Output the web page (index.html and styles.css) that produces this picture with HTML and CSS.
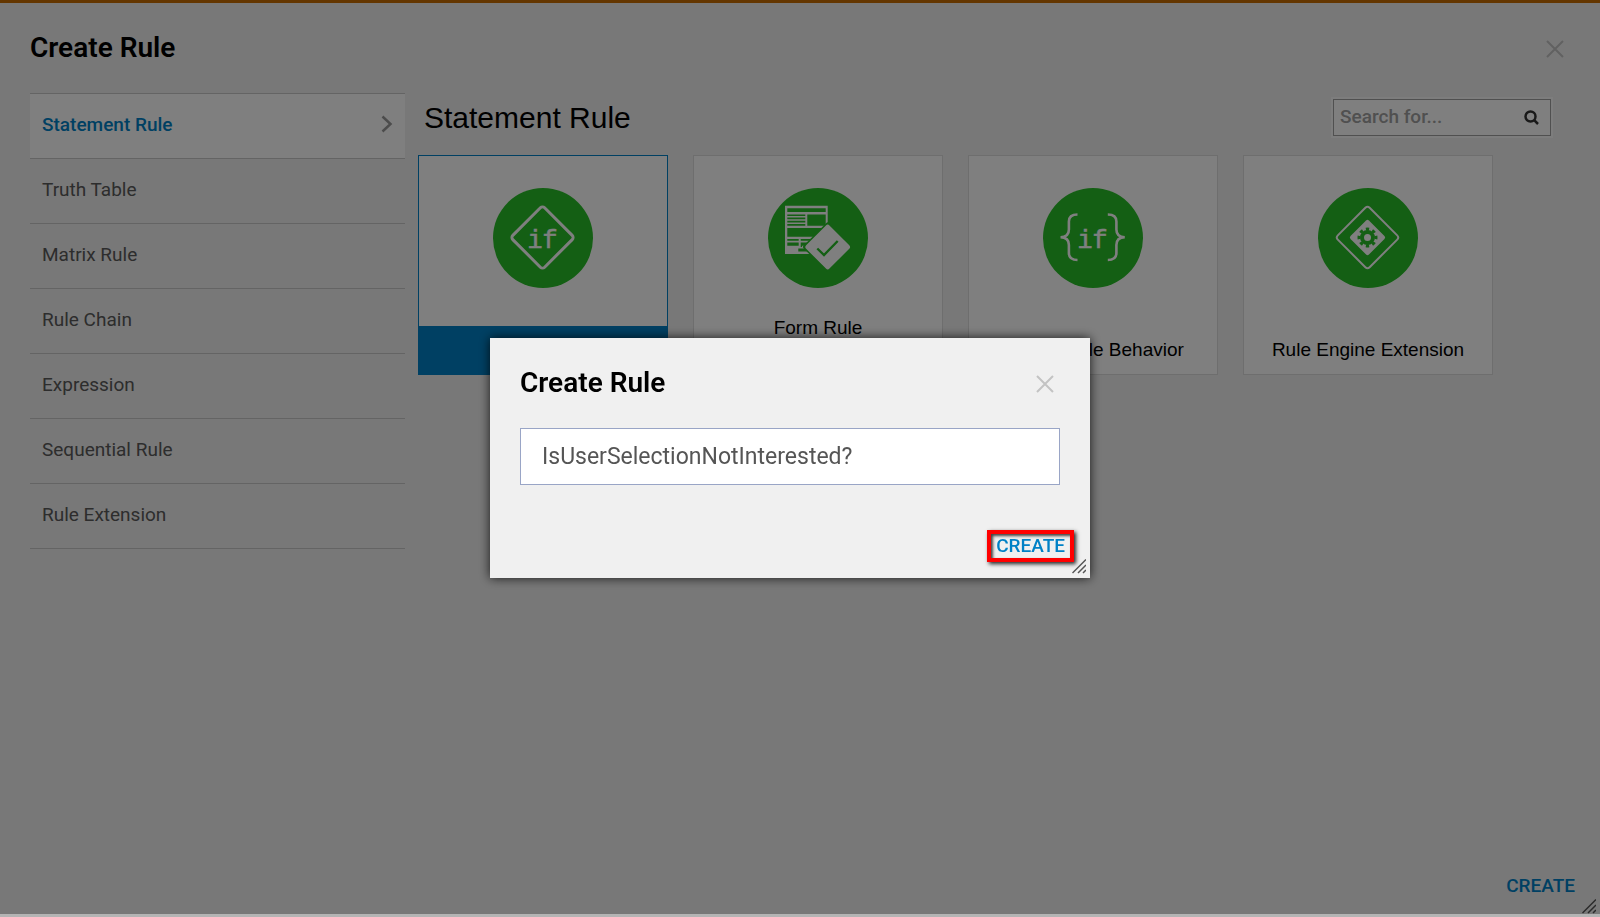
FILE: index.html
```html
<!DOCTYPE html>
<html lang="en">
<head>
<meta charset="utf-8">
<title>Create Rule</title>
<link rel="stylesheet" href="styles.css">
</head>
<body>
<div class="page">
  <header class="dialog-header">
    <h1 class="dialog-title">Create Rule</h1>
    <button class="close" type="button" aria-label="Close">
      <svg width="18" height="18" viewBox="0 0 18 18"><path d="M1 1L17 17M17 1L1 17"/></svg>
    </button>
  </header>

  <div class="content">
    <nav class="categories" aria-label="Rule categories">
      <a class="category category-active" href="#">Statement Rule
        <svg width="12" height="18" viewBox="0 0 12 18"><path d="M1.500 1.500L9.500 9L1.500 16.500"/></svg>
      </a>
      <a class="category" href="#">Truth Table</a>
      <a class="category" href="#">Matrix Rule</a>
      <a class="category" href="#">Rule Chain</a>
      <a class="category" href="#">Expression</a>
      <a class="category" href="#">Sequential Rule</a>
      <a class="category" href="#">Rule Extension</a>
    </nav>

    <main class="panel">
      <div class="panel-header">
        <h2 class="panel-title">Statement Rule</h2>
        <form class="search">
          <input class="search-input" type="text" placeholder="Search for..." aria-label="Search">
          <button class="search-button" type="button" aria-label="Search">
            <svg width="16" height="16" viewBox="0 0 16 16"><circle cx="6.500" cy="6.500" r="5"/><path d="M10.200 10.200L14 14"/></svg>
          </button>
        </form>
      </div>

      <div class="cards">
        <button class="card card-selected" type="button">
          <svg class="card-icon" viewBox="0 0 100 100">
            <circle class="disc" cx="50" cy="50" r="50"/>
            <rect class="line" x="27" y="27" width="45" height="45" rx="3" stroke-width="3" transform="rotate(45 49.500 49.500)"/>
            <text class="code" x="49.500" y="59.500" text-anchor="middle">if</text>
          </svg>
          <span class="card-label">Rule</span>
        </button>

        <button class="card" type="button">
          <svg class="card-icon" viewBox="0 0 100 100">
            <circle class="disc" cx="50" cy="50" r="50"/>
            <path class="solid" d="M17 17.700H59.700V66H17Z"/>
            <path class="disc" d="M19.300 20.300H57.700V24H19.300ZM19.300 26.500H37.300V28H19.300ZM19.300 29.500H37.300V31.200H19.300ZM19.300 32.800H37.300V34.400H19.300ZM19.300 36H37.300V37.700H19.300ZM39.300 26.500H57.700V37.700H39.300ZM19.300 40H57.700V48.700H19.300ZM19.300 51H30.700V52.800H19.300ZM32.700 51H42V52.800H32.700ZM19.300 54.500H30.700V57.700H19.300ZM32.700 54.500H40V57.700H34V59H32.700ZM30.300 60.500H45V63.500H30.300Z"/>
            <rect class="disc" x="41.700" y="41" width="36" height="36" rx="2" transform="rotate(45 59.700 59)"/>
            <rect class="solid" x="43.200" y="42.500" width="33" height="33" rx="2.500" transform="rotate(45 59.700 59)"/>
            <path class="tick" d="M49.300 60.500L56 67L69.700 53"/>
          </svg>
          <span class="card-label card-label-tall">Form Rule</span>
        </button>

        <button class="card" type="button">
          <svg class="card-icon" viewBox="0 0 100 100">
            <circle class="disc" cx="50" cy="50" r="50"/>
            <path class="line" stroke-width="2.600" d="M34.500 26.500C28.500 26.500 25.900 28.500 25.900 33.500V41.500C25.900 46.500 23.500 49.200 17.500 49.200C23.500 49.200 25.900 52 25.900 57V65C25.900 70 28.500 72 34.500 72M64.800 26.500C70.800 26.500 73.400 28.500 73.400 33.500V41.500C73.400 46.500 75.800 49.200 81.800 49.200C75.800 49.200 73.400 52 73.400 57V65C73.400 70 70.800 72 64.800 72"/>
            <text class="code" x="49.500" y="59.500" text-anchor="middle">if</text>
          </svg>
          <span class="card-label">Create Rule Behavior</span>
        </button>

        <button class="card" type="button">
          <svg class="card-icon" viewBox="0 0 100 100">
            <circle class="disc" cx="50" cy="50" r="50"/>
            <rect class="line" x="27" y="27" width="45" height="45" rx="3" stroke-width="2" transform="rotate(45 49.500 49.500)"/>
            <rect class="solid" x="36.500" y="36.500" width="26" height="26" rx="2" transform="rotate(45 49.500 49.500)"/>
            <circle class="gear-ring" cx="49.500" cy="49.500" r="5.500"/>
            <circle class="gear-teeth" cx="49.500" cy="49.500" r="8.500" pathLength="80"/>
          </svg>
          <span class="card-label">Rule Engine Extension</span>
        </button>
      </div>
    </main>
  </div>

  <footer class="page-footer">
    <button class="create" type="button">CREATE</button>
  </footer>
  <svg class="grip" width="14" height="16" viewBox="0 0 14 16"><path d="M0.500 15L14 1.500M6 15L14 7M11 15L14 12"/></svg>
</div>

<div class="overlay">
  <section class="modal" role="dialog" aria-modal="true" aria-labelledby="modal-title">
    <header class="dialog-header">
      <h2 class="dialog-title" id="modal-title">Create Rule</h2>
      <button class="close" type="button" aria-label="Close">
        <svg width="18" height="18" viewBox="0 0 18 18"><path d="M1 1L17 17M17 1L1 17"/></svg>
      </button>
    </header>
    <input class="name-input" type="text" value="IsUserSelectionNotInterested?" aria-label="Rule name">
    <footer class="modal-footer">
      <button class="create create-marked" type="button">CREATE</button>
    </footer>
    <svg class="grip" width="14" height="16" viewBox="0 0 14 16"><path d="M0.500 15L14 1.500M6 15L14 7M11 15L14 12"/></svg>
  </section>
</div>
</body>
</html>
```
FILE: styles.css
```css
* {
  box-sizing: border-box;
}

body {
  margin: 0;
  background: #b4b4b4;
  font-family: Roboto, sans-serif;
  font-size: 19px;
}

button {
  padding: 0;
  border: 0;
  background: none;
  font: inherit;
}

.page {
  position: relative;
  display: flex;
  flex-direction: column;
  min-height: calc(100vh - 3px);
  border-top: 3px solid #c86c00;
  background: #f0f0f0;
}

.dialog-header {
  display: flex;
  justify-content: space-between;
  align-items: center;
  height: 90px;
  padding: 0 36px 0 30px;
}

.dialog-title {
  margin: 0;
  padding-bottom: 2px;
  color: #000;
  font-size: 28px;
  font-weight: 600;
}

.close {
  display: flex;
  padding-top: 2px;
}

.close svg {
  fill: none;
  stroke: #c3c3c3;
  stroke-width: 2;
}

.content {
  display: flex;
  flex: 1;
  padding: 0 49px 0 30px;
}

.categories {
  flex: none;
  width: 375px;
}

.category {
  display: flex;
  justify-content: space-between;
  align-items: center;
  height: 65px;
  padding: 0 12px 4px;
  border-bottom: 1px solid #c8c8c8;
  color: #5a5a5a;
  text-decoration: none;
}

.category-active {
  height: 66px;
  border-top: 1px solid #c8c8c8;
  background: #fff;
  color: #0081c6;
  font-weight: 500;
}

.category svg {
  fill: none;
  stroke: #999;
  stroke-width: 2.5;
}

.panel {
  flex: 1;
  padding: 5px 0 0 13px;
}

.panel-header {
  display: flex;
  justify-content: space-between;
  height: 57px;
  padding-left: 6px;
}

.panel-title {
  margin: 0;
  color: #000;
  font-family: "Liberation Sans", Arial, sans-serif;
  font-size: 30px;
  font-weight: 400;
  line-height: 40px;
}

.search {
  display: flex;
  width: 218px;
  height: 37px;
  margin-top: 1px;
  border: 1px solid #a0a0a0;
  outline: 2px solid #fafafa;
  background: #fff;
}

.search-input {
  flex: 1;
  min-width: 0;
  padding: 0 0 2px 6px;
  border: 0;
  background: none;
  font: 500 19px Roboto, sans-serif;
}

.search-input::placeholder {
  color: #a0a0a0;
}

.search-button {
  display: flex;
  justify-content: center;
  align-items: center;
  width: 36px;
}

.search-button svg {
  fill: none;
  stroke: #333;
  stroke-width: 2.5;
}

.cards {
  display: flex;
  flex-wrap: wrap;
  gap: 25px;
}

.card {
  display: flex;
  flex-direction: column;
  align-items: center;
  justify-content: space-between;
  width: 250px;
  height: 220px;
  padding-top: 32px;
  border: 1px solid #dcdcdc;
  background: #fff;
  color: #000;
  font-family: "Liberation Sans", Arial, sans-serif;
}

.card-selected {
  border-color: #0081c6;
}

.card-icon {
  width: 100px;
  height: 100px;
}

.card-label {
  width: 100%;
  height: 48px;
  line-height: 48px;
}

.card-label-tall {
  height: 70px;
}

.card-selected .card-label {
  background: #0081c6;
  color: #fff;
}

.disc {
  fill: #28be28;
}

.solid {
  fill: #fff;
}

.line {
  fill: none;
  stroke: #fff;
}

.code {
  fill: #fff;
  stroke: #fff;
  stroke-width: 0.6px;
  font-family: "Liberation Mono", monospace;
  font-size: 25px;
}

.tick {
  fill: none;
  stroke: #28be28;
  stroke-width: 2.4;
}

.gear-ring {
  fill: none;
  stroke: #28be28;
  stroke-width: 4;
}

.gear-teeth {
  fill: none;
  stroke: #28be28;
  stroke-width: 3;
  stroke-dasharray: 5 5;
  stroke-dashoffset: 2.5;
}

.page-footer {
  display: flex;
  justify-content: flex-end;
  padding: 0 25px 16px;
}

.create {
  color: #0081c6;
  font-weight: 500;
  line-height: 24px;
}

.grip {
  position: absolute;
  right: 4px;
  bottom: 0;
  fill: none;
  stroke: #555;
  stroke-width: 1.5;
}

.overlay {
  position: fixed;
  inset: 0 0 3px;
  display: flex;
  justify-content: center;
  align-items: center;
  padding: 2px 20px 0 0;
  background: rgba(0, 0, 0, 0.5);
}

.modal {
  position: relative;
  width: 600px;
  background: #f0f0f0;
  box-shadow: 0 0 10px rgba(0, 0, 0, 0.8);
}

.modal .grip {
  bottom: 4px;
}

.name-input {
  display: block;
  width: calc(100% - 60px);
  height: 57px;
  margin: 0 30px;
  padding: 0 21px;
  border: 1px solid #99a5c6;
  background: #fff;
  color: #555;
  font: 23px Roboto, sans-serif;
}

.modal-footer {
  display: flex;
  justify-content: flex-end;
  padding: 45px 16px 16px;
}

.create-marked {
  padding: 0 5px;
  border: 4px solid #f00;
  box-shadow: 2px 2px 4px #222, inset 2px 2px 3px #444;
}
```
